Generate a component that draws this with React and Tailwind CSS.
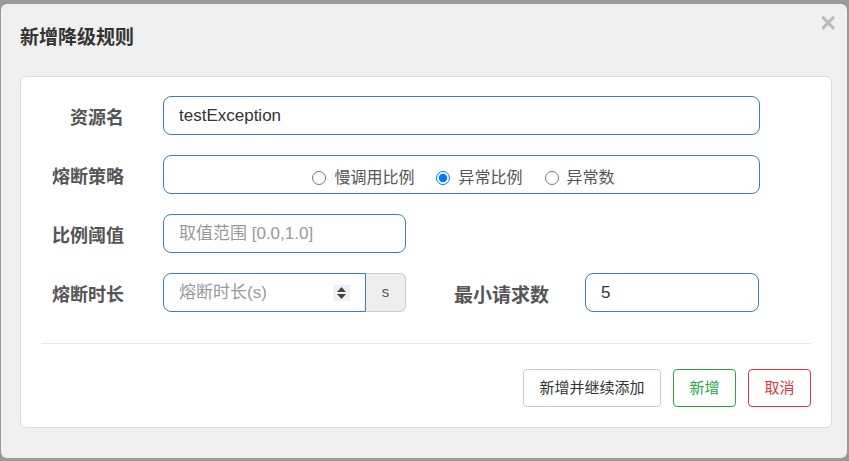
import React from 'react';

const cjk = { fontFamily: '"Liberation Sans", "Noto Sans CJK SC", sans-serif' };

function Label({ children, className = '' }) {
  return (
    <div className={`h-[39px] w-[83px] shrink-0 translate-y-[3px] text-right text-[18px] font-bold text-[#555] leading-[39px] ${className}`}>
      {children}
    </div>
  );
}

function Radio({ label, checked }) {
  return (
    <label className="flex items-center gap-[8px]">
      <input type="radio" name="grade" defaultChecked={checked} className="m-0 h-[14px] w-[14px] accent-[#0075ff]" />
      <span>{label}</span>
    </label>
  );
}

function Spinner() {
  return (
    <div className="flex h-[16px] w-[17px] flex-col items-center justify-center gap-[2px] bg-[#f0f0f0]">
      <svg width="9" height="5" viewBox="0 0 9 5"><path d="M4.5 0L9 5H0z" fill="#444" /></svg>
      <svg width="9" height="5" viewBox="0 0 9 5"><path d="M0 0h9L4.5 5z" fill="#444" /></svg>
    </div>
  );
}

export default function App() {
  return (
    <div className="h-[461px] w-[849px] bg-[#9a9a9a] pl-[1px] pt-[4px]" style={cjk}>
      <div className="h-[454px] w-[846px] rounded-[6px] bg-[#f0f0f0]">

        {/* header */}
        <div className="relative h-[72px] px-[19px] pt-[21px]">
          <h3 className="text-[19px] font-bold leading-[26px] text-[#333]">新增降级规则</h3>
          <span className="absolute right-[11px] top-[6px] text-[27px] font-bold leading-none text-[#bbb]">×</span>
        </div>

        {/* body card */}
        <div className="ml-[19px] mr-[15px] h-[352px] rounded-[6px] border border-[#ddd] bg-white px-[20px] pt-[19px]">
          <div className="flex flex-col gap-[20px]">
            <div className="flex items-center gap-[39px]">
              <Label>资源名</Label>
              <div className="flex h-[39px] w-[597px] items-center rounded-[8px] border border-[#3d7ebf] px-[15px] text-[17px] text-[#333]">
                testException
              </div>
            </div>

            <div className="flex items-center gap-[39px]">
              <Label>熔断策略</Label>
              <div className="flex h-[39px] w-[597px] items-center justify-center gap-[22px] rounded-[8px] border border-[#3d7ebf] pl-[4px] pt-[6px] text-[16px] text-[#555]">
                <Radio label="慢调用比例" />
                <Radio label="异常比例" checked />
                <Radio label="异常数" />
              </div>
            </div>

            <div className="flex items-center gap-[39px]">
              <Label>比例阈值</Label>
              <div className="flex h-[39px] w-[243px] items-center rounded-[8px] border border-[#3d7ebf] px-[15px] text-[17px] text-[#999]">
                取值范围 [0.0,1.0]
              </div>
            </div>

            <div className="flex items-center">
              <Label>熔断时长</Label>
              <div className="ml-[39px] flex h-[39px] w-[243px]">
                <div className="flex flex-1 items-center justify-between rounded-l-[8px] border border-[#3d7ebf] pl-[15px] pr-[15px] text-[17px] text-[#999]">
                  <span>熔断时长(s)</span>
                  <Spinner />
                </div>
                <div className="flex w-[40px] items-center justify-center rounded-r-[6px] border border-l-0 border-[#ccc] bg-[#eee] text-[15px] text-[#555]">
                  s
                </div>
              </div>
              <div className="ml-[48px] h-[39px] translate-y-[3px] text-[19px] font-bold leading-[39px] text-[#555]">最小请求数</div>
              <div className="ml-[36px] flex h-[39px] w-[174px] items-center rounded-[8px] border border-[#3d7ebf] px-[15px] text-[17px] text-[#333]">
                5
              </div>
            </div>
          </div>

          <div className="mt-[31px] border-t border-[#e5e5e5]" />

          <div className="mt-[25px] flex justify-end gap-[12px] text-[15px]">
            <button className="h-[38px] w-[138px] rounded-[4px] border border-[#ccc] bg-white text-[#333]">新增并继续添加</button>
            <button className="h-[38px] w-[63px] rounded-[4px] border border-[#28a745] bg-white text-[#28a745]">新增</button>
            <button className="h-[38px] w-[63px] rounded-[4px] border border-[#dc3545] bg-white text-[#dc3545]">取消</button>
          </div>
        </div>
      </div>
    </div>
  );
}
